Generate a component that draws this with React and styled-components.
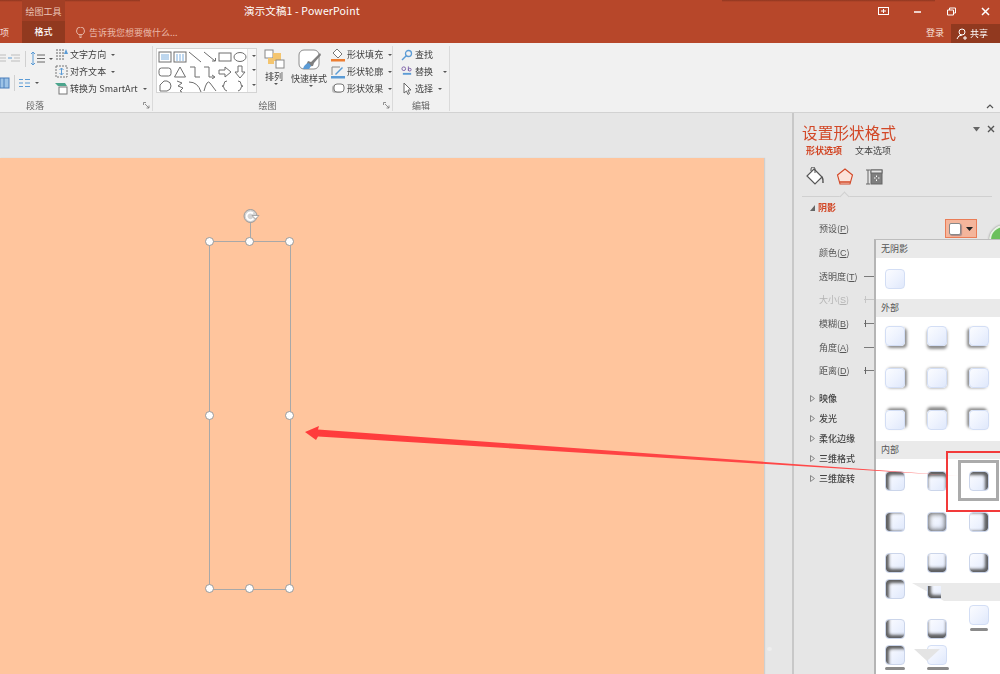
import React from 'react';
import styled, {createGlobalStyle} from 'styled-components';

const Global = createGlobalStyle`
    html, body { margin: 0; padding: 0; background: #E6E6E6; overflow: hidden; }
    body { font-family: "Noto Sans CJK SC", "Liberation Sans", sans-serif; }
`;

const Window = styled.div`
    position: relative;
    width: 1000px;
    height: 674px;
    overflow: hidden;
    display: flex;
    flex-direction: column;
    filter: blur(0.3px);
`;

/* title bar */
const TitleBar = styled.div`
    height: 43px;
    background:
        linear-gradient(#8E3620, #B7472A) 0 0 / 140px 2px no-repeat,
        linear-gradient(#8E3620, #B7472A) 722px 0 / 213px 2px no-repeat,
        #B7472A;
    color: #fff;
    display: grid;
    grid-template-rows: 21px 22px;
    flex: none;
`;

const TopRow = styled.div`
    display: flex;
    align-items: center;
`;

const BottomRow = styled.div`
    display: flex;
    align-items: center;
`;

const ContextLabel = styled.div`
    margin-left: 22px;
    width: 43px;
    height: 21px;
    background: #A23F25;
    color: #EBC4B8;
    font-size: 9px;
    line-height: 24px;
    text-align: center;
`;

const DocTitle = styled.div`
    margin-left: 179px;
    font-size: 10.5px;
    line-height: 24px;
    letter-spacing: 0.15px;
    color: #fff;
    font-family: "Noto Sans CJK SC", "Noto Sans", sans-serif;
`;

const WindowButtons = styled.div`
    margin-left: auto;
    display: grid;
    grid-template-columns: repeat(4, 34px);
    justify-items: center;
    width: 136px;
    margin-right: -2px;
    padding-top: 2px;
`;

const TabStub = styled.div`
    width: 9px;
    font-size: 9px;
    text-align: center;
    color: #F5DDD5;
`;

const ActiveTab = styled.div`
    width: 43px;
    height: 22px;
    margin-left: 13px;
    background: #91391F;
    font-size: 9px;
    font-weight: 500;
    line-height: 22px;
    text-align: center;
    color: #fff;
`;

const TellMe = styled.div`
    margin-left: 11px;
    display: flex;
    align-items: center;
    gap: 4px;
    font-size: 9px;
    color: #EAB9A9;
`;

const Login = styled.div`
    margin-left: auto;
    font-size: 9px;
    color: #F7E3DC;
    margin-right: 7px;
`;

const ShareButton = styled.div`
    width: 49px;
    height: 19px;
    margin-top: 3px;
    background: #91391F;
    display: flex;
    align-items: center;
    gap: 2px;
    padding-left: 5px;
    box-sizing: border-box;
    font-size: 9px;
    color: #fff;
`;

/* ribbon */
const Ribbon = styled.div`
    position: relative;
    height: 70px;
    flex: none;
    background: #F1F1F1;
    border-bottom: 1px solid #D2D2D2;
    box-sizing: border-box;
    display: flex;
    padding-top: 3px;
`;

const Group = styled.div`
    position: relative;
    width: ${props => props.$width}px;
    height: 65px;
    flex: none;
    border-right: 1px solid #DADADA;
    box-sizing: border-box;
    display: flex;
    flex-direction: column;
`;

const GroupBody = styled.div`
    display: flex;
    height: 53px;
    flex: none;
`;

const GroupLabel = styled.div`
    font-size: 9px;
    line-height: 14px;
    text-align: center;
    color: #666;
    padding-right: ${props => props.$shift || 0}px;
`;

const Launcher = styled.svg`
    position: absolute;
    right: 2px;
    bottom: 2px;
`;

const ParaTools = styled.div`
    width: 55px;
    flex: none;
    display: flex;
    flex-direction: column;
    gap: 9px;
    padding-top: 5px;
`;

const ParaRow = styled.div`
    display: flex;
    align-items: center;
    height: 15px;
    gap: 4px;
    margin-left: ${props => props.$offset}px;
`;

const ToolSep = styled.div`
    width: 1px;
    height: 16px;
    background: #D0D0D0;
`;

const Caret = styled.span`
    display: inline-block;
    width: 0;
    height: 0;
    border-left: 2px solid transparent;
    border-right: 2px solid transparent;
    border-top: 2.5px solid #555;
    margin-left: ${props => props.$gap || 3}px;
`;

const CommandColumn = styled.div`
    display: flex;
    flex-direction: column;
    justify-content: flex-start;
    padding-top: 0;
    margin-left: ${props => props.$offset || 0}px;
`;

const Command = styled.div`
    height: 17px;
    display: flex;
    align-items: center;
    gap: 2px;
    font-size: 9px;
    letter-spacing: 0.05px;
    color: #3F3F3F;
    white-space: nowrap;
`;

const Gallery = styled.div`
    margin: 2px 0 0 3px;
    width: 101px;
    height: 45px;
    flex: none;
    background: #fff;
    border: 1px solid #D4D4D4;
    box-sizing: border-box;
    display: flex;
`;

const ShapeGrid = styled.div`
    width: 90px;
    display: grid;
    grid-template-columns: repeat(6, 15px);
    grid-auto-rows: 14.5px;
    place-items: center;
    padding-top: 1px;
`;

const GalleryScroll = styled.div`
    flex: 1;
    display: grid;
    grid-template-rows: repeat(3, 1fr);
    border-left: 1px solid #E4E4E4;
    place-items: center;
    background: #F7F7F7;
`;

const BigButton = styled.div`
    width: ${props => props.$width}px;
    margin-left: ${props => props.$gap}px;
    display: flex;
    flex-direction: column;
    align-items: center;
    font-size: 9px;
    color: #3F3F3F;
    flex: none;
`;

const BigIcon = styled.svg`
    margin-top: 3px;
    margin-bottom: 1px;
`;

const BigLabel = styled.div`
    line-height: 13px;
    white-space: nowrap;
`;

const Collapse = styled.svg`
    position: absolute;
    right: 6px;
    bottom: 3px;
`;

/* work area */
const Workspace = styled.div`
    flex: 1;
    display: flex;
    min-height: 0;
    background: #E6E6E6;
`;

const Canvas = styled.div`
    position: relative;
    width: 792px;
    flex: none;
    padding-top: 45px;
    box-sizing: border-box;
`;

const Slide = styled.div`
    width: 764px;
    height: 530px;
    background: #FFC59D;
    padding: 83px 0 0 209px;
    box-sizing: border-box;
    box-shadow: 1px 0 1px #CFCFCF;
`;

const Selection = styled.div`
    position: relative;
    width: 82px;
    height: 349px;
    border: 1px solid #A8A8A8;
    box-sizing: border-box;
`;

const Handle = styled.div`
    position: absolute;
    width: 7px;
    height: 7px;
    border: 1px solid #999;
    border-radius: 50%;
    background: #fff;
    left: calc(${props => props.$x}% - 5px);
    top: calc(${props => props.$y}% - 5px);
`;

const RotateStem = styled.div`
    position: absolute;
    left: 40px;
    top: -20px;
    width: 1px;
    height: 20px;
    background: #A8A8A8;
`;

const RotateHandle = styled.svg`
    position: absolute;
    left: 32px;
    top: -35px;
`;

const ScrollGrip = styled.div`
    position: absolute;
    left: 767px;
    top: 534px;
    width: 5px;
    height: 4px;
    border-radius: 2px;
    background: #EEEEEE;
`;

/* format panel */
const Panel = styled.div`
    position: relative;
    flex: 1;
    border-left: 2px solid #C8C8C8;
    padding: 8px 0 0 8px;
    box-sizing: border-box;
`;

const PanelTitle = styled.div`
    font-size: 15.5px;
    line-height: 22px;
    color: #D24726;
    letter-spacing: 0.2px;
`;

const PanelClose = styled.div`
    position: absolute;
    right: 5px;
    top: 12px;
    display: flex;
    align-items: center;
    gap: 7px;
`;

const OptionTabs = styled.div`
    display: flex;
    gap: 13px;
    padding-left: 4px;
    margin-top: 1px;
    font-size: 9px;
    line-height: 14px;
`;

const OptionTab = styled.div`
    color: ${props => props.$active ? '#D24726' : '#444'};
    font-weight: ${props => props.$active ? 700 : 400};
`;

const PanelIcons = styled.div`
    display: flex;
    gap: 10px;
    padding-left: 3px;
    margin-top: 6px;
    height: 26px;
    align-items: center;
`;

const IconDivider = styled.div`
    position: relative;
    width: 190px;
    height: 1px;
    margin-top: 6px;
    background: #D0D0D0;
    &::after {
        content: '';
        position: absolute;
        left: 39px;
        top: -3px;
        width: 6px;
        height: 6px;
        background: #E6E6E6;
        border-left: 1px solid #D0D0D0;
        border-top: 1px solid #D0D0D0;
        transform: rotate(45deg);
    }
`;

const SectionHead = styled.div`
    display: flex;
    align-items: center;
    height: ${props => props.$height || 20}px;
    margin-top: ${props => props.$top || 0}px;
    padding-left: ${props => props.$indent || 6}px;
    font-size: 9px;
    font-weight: ${props => props.$active ? 700 : 500};
    color: ${props => props.$active ? '#D24726' : '#444'};
`;

const Twist = styled.svg`
    width: 5px;
    height: 7px;
    margin-right: ${props => props.$gap || 6}px;
    flex: none;
`;

const PropRow = styled.div`
    display: flex;
    align-items: center;
    height: 23.7px;
    padding-left: 17px;
    font-size: 9px;
    color: ${props => props.$disabled ? '#B4B4B4' : '#555'};
`;

const PropLabel = styled.span`
    width: ${props => props.$width || 45}px;
    flex: none;
`;

const PropKey = styled.span`
    text-decoration: underline;
    font-family: "Liberation Sans", sans-serif;
`;

const Track = styled.div`
    position: relative;
    width: 12px;
    height: 1px;
    background: ${props => props.$disabled ? '#C6C6C6' : '#7A7A7A'};
    &::before {
        content: '';
        display: ${props => props.$tick ? 'block' : 'none'};
        position: absolute;
        left: 1px;
        top: -3px;
        width: 1px;
        height: 7px;
        background: ${props => props.$disabled ? '#C6C6C6' : '#666'};
    }
`;

const PresetButton = styled.div`
    margin-left: 78px;
    width: 32px;
    height: 19px;
    background: #F4B59B;
    border: 1px solid #EA7D57;
    box-sizing: border-box;
    display: flex;
    align-items: center;
    justify-content: center;
    gap: 5px;
`;

const PresetSwatch = styled.div`
    width: 10px;
    height: 10px;
    background: #fff;
    border: 1px solid #888;
    border-radius: 2px;
    box-shadow: 1px 1px 1px #A88;
`;

const CursorDisc = styled.div`
    position: absolute;
    left: 195px;
    top: 112px;
    width: 26px;
    height: 26px;
    border-radius: 50%;
    background: #6CC05C;
    border: 2px solid #E8F2E4;
    box-shadow: 0 0 2px #777;
`;

const SubSections = styled.div`
    margin-top: 6px;
    display: flex;
    flex-direction: column;
`;

/* shadow presets popup */
const ShadowMenu = styled.div`
    position: absolute;
    left: 80px;
    top: 126px;
    width: 130px;
    height: 440px;
    background: #fff;
    border-left: 2px solid #B5B5B5;
    border-top: 1px solid #BDBDBD;
    box-sizing: border-box;
`;

const MenuHeader = styled.div`
    height: 18px;
    background: #EAEAEA;
    font-size: 9px;
    line-height: 18px;
    padding-left: 5px;
    color: #555;
`;

const TileGrid = styled.div`
    display: grid;
    grid-template-columns: 42px 42px 42px;
    grid-auto-rows: ${props => props.$pitch}px;
    padding: ${props => props.$top}px 0 0 9px;
    height: ${props => props.$height}px;
    box-sizing: border-box;
`;

const Tile = styled.div`
    position: relative;
    width: 20px;
    height: 20px;
    border-radius: 4px;
    box-sizing: border-box;
    background: linear-gradient(135deg, #FBFCFF 0%, #EDF2FE 55%, #DFE8FB 100%);
    border: 1px solid ${props => props.$inner ? '#CBD5EA' : '#D3DEF5'};
    box-shadow: ${props => props.$shadow || 'none'};
    clip-path: ${props => props.$clip || 'none'};
    &::after {
        content: '';
        display: ${props => props.$selected ? 'block' : 'none'};
        position: absolute;
        inset: -12px -11px -11px -12px;
        border: 3px solid #ABABAB;
    }
`;

const PerspectiveBand = styled.div`
    margin-left: 36px;
    height: 18px;
    background: #EAEAEA;
    clip-path: polygon(0 0, 100% 0, 100% 100%, 32px 100%);
`;

const TailGrid = styled.div`
    position: relative;
    margin-top: -22px;
    padding-left: 9px;
    display: grid;
    grid-template-columns: 42px 42px 42px;
`;

const TailColumn = styled.div`
    display: flex;
    flex-direction: column;
    padding-top: ${props => props.$top || 0}px;
`;

const TailTile = styled(Tile)`
    margin-bottom: ${props => props.$after || 0}px;
`;

const ShadowBar = styled.div`
    width: ${props => props.$width}px;
    height: 3px;
    margin-left: ${props => props.$left || 0}px;
    border-radius: 2px;
    background: #8A8A8A;
    filter: blur(0.5px);
`;

const TornTriangle = styled.div`
    position: absolute;
    left: 38px;
    top: 70px;
    width: 26px;
    height: 12px;
    background: #E4E4E4;
    clip-path: polygon(0 0, 100% 0, 50% 100%);
`;

/* annotation */
const AnnotationLayer = styled.svg`
    position: absolute;
    left: 0;
    top: 0;
    pointer-events: none;
`;

const RedFrame = styled.div`
    position: absolute;
    left: 946px;
    top: 451px;
    width: 60px;
    height: 61px;
    border: 2.5px solid #F23A3A;
    box-sizing: border-box;
`;

const blue = '#5B9BD5';
const ink = '#6E6E6E';

const shapeIcons = [
    <g><rect x="1" y="2" width="12" height="10" fill="none" stroke={ink}/><path d="M3 5h8M3 7h8M3 9h8" stroke={blue} strokeWidth=".8"/></g>,
    <g><rect x="1" y="2" width="12" height="10" fill="none" stroke={ink}/><path d="M4 4v7M7 4v7M10 4v7" stroke={blue} strokeWidth=".8"/></g>,
    <path d="M1 2l12 10" stroke={ink} fill="none"/>,
    <path d="M1 2l11 9M9 11h3.500v-3" stroke={ink} fill="none"/>,
    <rect x="1" y="3" width="12" height="8" fill="none" stroke={ink}/>,
    <ellipse cx="7" cy="7" rx="6" ry="4.500" fill="none" stroke={ink}/>,
    <rect x="1" y="3" width="12" height="8" rx="2.500" fill="none" stroke={ink}/>,
    <path d="M7 2l5.500 10h-11z" fill="none" stroke={ink}/>,
    <path d="M2 2h5v10h5" fill="none" stroke={ink}/>,
    <path d="M1 2h5v10h5M9 10l3 2-3 2" fill="none" stroke={ink}/>,
    <path d="M1 5h6V2l6 5-6 5V9H1z" fill="none" stroke={ink}/>,
    <path d="M5 1h4v6h3l-5 6-5-6h3z" fill="none" stroke={ink}/>,
    <path d="M2 12V6l4-4h3q4 1 4 5t-4 5z" fill="none" stroke={ink}/>,
    <path d="M4 2l5 2-4 3 5 2-3 3M7 12l2 1" fill="none" stroke={ink}/>,
    <path d="M1 3q9 0 12 10" fill="none" stroke={ink}/>,
    <path d="M1 12q3-12 6-8t6 8" fill="none" stroke={ink}/>,
    <path d="M9 2Q6 2 6 5t-2 2q2 0 2 2t3 3" fill="none" stroke={ink}/>,
    <path d="M5 2q3 0 3 3t2 2q-2 0-2 2t-3 3" fill="none" stroke={ink}/>,
];

const outerShadows = [
    '2px 2px 3px #8C8C8C', '0 3px 3px #8C8C8C', '-2px 2px 3px #8C8C8C',
    '2px 0 3px #8C8C8C', '0 0 3px #8C8C8C', '-2px 0 3px #8C8C8C',
    '2px -2px 3px #8C8C8C', '0 -3px 3px #8C8C8C', '-2px -2px 3px #8C8C8C',
];

const insetColor = 'rgba(70,70,70,.85)';
const innerShadows = [
    `inset 3px 3px 3px ${insetColor}`, `inset 0 4px 3px ${insetColor}`, `inset -3px 3px 3px ${insetColor}`,
    `inset 4px 0 3px ${insetColor}`, `inset 0 0 5px 1px ${insetColor}`, `inset -4px 0 3px ${insetColor}`,
    `inset 3px -3px 3px ${insetColor}`, `inset 0 -4px 3px ${insetColor}`, `inset -3px -3px 3px ${insetColor}`,
];

const properties = [
    {label: '透明度', key: 'T', track: true},
    {label: '大小', key: 'S', track: true, tick: true, disabled: true},
    {label: '模糊', key: 'B', track: true, tick: true},
    {label: '角度', key: 'A', track: true},
    {label: '距离', key: 'D', track: true, tick: true},
];

const collapsed = ['映像', '发光', '柔化边缘', '三维格式', '三维旋转'];

const handles = [[0, 0], [50, 0], [100, 0], [0, 50], [100, 50], [0, 100], [50, 100], [100, 100]];

const LauncherIcon = () => (
    <Launcher width="7" height="7" viewBox="0 0 7 7">
        <path d="M.5 3V.5H3M2 2l4 4M6 3.500V6H3.500" fill="none" stroke="#777" strokeWidth=".8"/>
    </Launcher>
);

const WindowGlyphs = () => (
    <WindowButtons>
        <svg width="11" height="9" viewBox="0 0 11 9"><rect x=".5" y=".5" width="10" height="7" fill="none" stroke="#fff"/><path d="M3 4h5M5.500 2v4" stroke="#fff"/></svg>
        <svg width="9" height="9" viewBox="0 0 9 9"><path d="M1 5h7" stroke="#fff" strokeWidth="1.500"/></svg>
        <svg width="9" height="9" viewBox="0 0 9 9"><path d="M.5 3h6v5h-6zM2.500 3V1h6v5h-2" fill="none" stroke="#fff"/></svg>
        <svg width="9" height="9" viewBox="0 0 9 9"><path d="M1 1l7 7M8 1L1 8" stroke="#fff" strokeWidth="1.500"/></svg>
    </WindowButtons>
);

const App = () => (
    <Window>
        <Global/>
        <TitleBar>
            <TopRow>
                <ContextLabel>绘图工具</ContextLabel>
                <DocTitle>演示文稿1 - PowerPoint</DocTitle>
                <WindowGlyphs/>
            </TopRow>
            <BottomRow>
                <TabStub>项</TabStub>
                <ActiveTab>格式</ActiveTab>
                <TellMe>
                    <svg width="9" height="11" viewBox="0 0 9 11"><path d="M2.500 7.500Q.5 6 .5 4a4 4 0 0 1 8 0q0 2-2 3.500zM3 9h3M3.500 10.500h2" fill="none" stroke="#F0CFC3" strokeWidth=".8"/></svg>
                    告诉我您想要做什么...
                </TellMe>
                <Login>登录</Login>
                <ShareButton>
                    <svg width="12" height="12" viewBox="0 0 12 12"><circle cx="6" cy="4" r="3" fill="none" stroke="#fff"/><path d="M1 11q1-4 5-4M7 10h4M9 8v4" fill="none" stroke="#fff"/></svg>
                    共享
                </ShareButton>
            </BottomRow>
        </TitleBar>

        <Ribbon>
            <Group $width={153}>
                <GroupBody>
                    <ParaTools>
                        <ParaRow $offset={-1}>
                            <svg width="22" height="11" viewBox="0 0 22 11"><path d="M0 2h7M0 5h7M0 8h7M12 2h9M15 5h6M12 8h9" stroke="#BDBDBD"/><path d="M9 5h4" stroke={blue}/></svg>
                            <ToolSep/>
                            <svg width="16" height="15" viewBox="0 0 16 15"><path d="M3 1v13M1 3l2-2 2 2M1 12l2 2 2-2" fill="none" stroke={blue}/><path d="M7 4h8M7 7.500h8M7 11h8" stroke="#666"/></svg>
                            <Caret $gap={-1}/>
                        </ParaRow>
                        <ParaRow $offset={0}>
                            <svg width="10" height="12" viewBox="0 0 10 12"><rect x="0" y="1" width="9" height="10" fill="#9DC3E6" stroke="#4A7EBB"/><path d="M4 1v10" stroke="#4A7EBB"/></svg>
                            <ToolSep/>
                            <svg width="11" height="10" viewBox="0 0 11 10"><path d="M0 1.500h4M6 1.500h5M0 5h4M6 5h5M0 8.500h4M6 8.500h5" stroke={blue}/></svg>
                            <Caret $gap={1}/>
                        </ParaRow>
                    </ParaTools>
                    <CommandColumn>
                        <Command>
                            <svg width="13" height="13" viewBox="0 0 13 13"><path d="M2 1v11M5 1v11M8 1v11" stroke="#666" strokeDasharray="2 1"/><path d="M11 1l-2 5h4z" fill={blue}/></svg>
                            文字方向<Caret/>
                        </Command>
                        <Command>
                            <svg width="13" height="13" viewBox="0 0 13 13"><path d="M1 1h11v11H1z" fill="none" stroke="#777" strokeDasharray="2 1"/><path d="M6.500 3v7M4.500 5l2-2 2 2M4.500 8l2 2 2-2" fill="none" stroke={blue}/></svg>
                            对齐文本<Caret/>
                        </Command>
                        <Command>
                            <svg width="13" height="13" viewBox="0 0 13 13"><path d="M0 1h10l2 3H3z" fill="#4CA58D"/><rect x="4" y="5" width="8" height="7" fill="#fff" stroke="#777"/></svg>
                            转换为 SmartArt<Caret/>
                        </Command>
                    </CommandColumn>
                </GroupBody>
                <GroupLabel $shift={82}>段落</GroupLabel>
                <LauncherIcon/>
            </Group>
            <Group $width={240}>
                <GroupBody>
                    <Gallery>
                        <ShapeGrid>
                            {shapeIcons.map((icon, i) => (
                                <svg key={i} width="14" height="14" viewBox="0 0 14 14">{icon}</svg>
                            ))}
                        </ShapeGrid>
                        <GalleryScroll>
                            <Caret $gap={0}/>
                            <Caret $gap={0}/>
                            <Caret $gap={0}/>
                        </GalleryScroll>
                    </Gallery>
                    <BigButton $width={22} $gap={6}>
                        <BigIcon width="21" height="20" viewBox="0 0 21 20">
                            <rect x="1" y="1" width="8" height="8" fill="#fff" stroke="#888"/>
                            <rect x="9" y="4" width="8" height="8" fill="#F4C56F"/>
                            <rect x="4" y="9" width="6" height="6" fill="#F4C56F"/>
                            <rect x="12" y="11" width="8" height="8" fill="#fff" stroke="#888"/>
                        </BigIcon>
                        <BigLabel>排列</BigLabel>
                        <Caret $gap={0}/>
                    </BigButton>
                    <BigButton $width={36} $gap={6}>
                        <BigIcon width="23" height="22" viewBox="0 0 23 22">
                            <rect x="1" y="1" width="20" height="19" rx="5" fill="#fff" stroke="#8C8C8C"/>
                            <path d="M22 4l-9 9-3-1-3 6 8-1 1-3 7-8z" fill="#7F7F7F"/>
                            <path d="M5 20q1-5 6-6l2 3-2 3z" fill={blue}/>
                        </BigIcon>
                        <BigLabel>快速样式</BigLabel>
                        <Caret $gap={0}/>
                    </BigButton>
                    <CommandColumn $offset={4}>
                        <Command>
                            <svg width="14" height="14" viewBox="0 0 14 14"><path d="M6 1l5 5-4 4-5-5z" fill="#fff" stroke="#777"/><rect x="0" y="11" width="14" height="2.500" fill="#ED7D31"/></svg>
                            形状填充<Caret/>
                        </Command>
                        <Command>
                            <svg width="14" height="14" viewBox="0 0 14 14"><path d="M1 10V2h8" fill="none" stroke="#888"/><path d="M4 9l7-7 1 1-7 7z" fill={blue}/><rect x="0" y="11" width="14" height="2.500" fill={blue}/></svg>
                            形状轮廓<Caret/>
                        </Command>
                        <Command>
                            <svg width="14" height="14" viewBox="0 0 14 14"><rect x="1" y="3" width="10" height="8" rx="3" fill="#bbb"/><rect x="3" y="2" width="10" height="8" rx="3" fill="#fff" stroke="#777"/></svg>
                            形状效果<Caret/>
                        </Command>
                    </CommandColumn>
                </GroupBody>
                <GroupLabel $shift={10}>绘图</GroupLabel>
                <LauncherIcon/>
            </Group>
            <Group $width={57}>
                <GroupBody>
                    <CommandColumn $offset={8}>
                        <Command>
                            <svg width="12" height="12" viewBox="0 0 12 12"><circle cx="7.500" cy="4.500" r="3" fill="none" stroke={blue} strokeWidth="1.300"/><path d="M5.500 6.500L1 11" stroke={blue} strokeWidth="1.500"/></svg>
                            查找
                        </Command>
                        <Command>
                            <svg width="12" height="13" viewBox="0 0 13 13"><circle cx="3" cy="3.500" r="2" fill="none" stroke="#7B5EA7"/><path d="M8 1v5" stroke="#7B5EA7"/><circle cx="9.500" cy="4.500" r="1.500" fill="none" stroke="#7B5EA7"/><rect x="2" y="8" width="9" height="2" fill={blue}/></svg>
                            替换<Caret $gap={8}/>
                        </Command>
                        <Command>
                            <svg width="12" height="13" viewBox="0 0 12 13"><path d="M3 1v10l2.500-2 1.500 3.500 1.500-1L7 8h3z" fill="#fff" stroke="#666"/></svg>
                            选择<Caret/>
                        </Command>
                    </CommandColumn>
                </GroupBody>
                <GroupLabel>编辑</GroupLabel>
            </Group>
            <Collapse width="8" height="6" viewBox="0 0 8 6"><path d="M1 5l3-3 3 3" fill="none" stroke="#555" strokeWidth="1.200"/></Collapse>
        </Ribbon>

        <Workspace>
            <Canvas>
                <Slide>
                    <Selection>
                        <RotateStem/>
                        <RotateHandle width="22" height="20" viewBox="0 0 22 20">
                            <circle cx="8.500" cy="9" r="6.500" fill="#D4D4D4" stroke="#9C9C9C"/>
                            <path d="M11.500 11.500a3.800 3.800 0 1 1-.5-5" fill="none" stroke="#fff" strokeWidth="1.800"/>
                            <path d="M10 8.500h7l-3.500 3.500z" fill="#fff" stroke="#8E8E8E" strokeWidth=".7"/>
                        </RotateHandle>
                        {handles.map(([x, y]) => <Handle key={`${x}-${y}`} $x={x} $y={y}/>)}
                    </Selection>
                </Slide>
                <ScrollGrip/>
            </Canvas>
            <Panel>
                <PanelTitle>设置形状格式</PanelTitle>
                <PanelClose>
                    <svg width="7" height="5" viewBox="0 0 7 5"><path d="M0 0h7L3.500 4.500z" fill="#666"/></svg>
                    <svg width="8" height="8" viewBox="0 0 8 8"><path d="M1 1l6 6M7 1L1 7" stroke="#555" strokeWidth="1.400"/></svg>
                </PanelClose>
                <OptionTabs>
                    <OptionTab $active>形状选项</OptionTab>
                    <OptionTab>文本选项</OptionTab>
                </OptionTabs>
                <PanelIcons>
                    <svg width="20" height="20" viewBox="0 0 20 20"><path d="M9 2l8 8-7 7-8-8z" fill="#fff" stroke="#555" strokeWidth="1.200"/><path d="M6 4V2a2 2 0 0 1 4 0v4" fill="none" stroke="#555"/><path d="M17 10q1.500 2.500 1 6" fill="none" stroke="#555" strokeWidth="1.500"/></svg>
                    <svg width="20" height="20" viewBox="0 0 20 20"><path d="M10 2l7.500 6-2.500 9H5L2.500 8z" fill="#FBE3DA" stroke="#D24726" strokeWidth="1.100"/><path d="M5 15h10" stroke="#D24726" strokeWidth="1.500"/></svg>
                    <svg width="18" height="16" viewBox="0 0 18 16"><path d="M1 1h4M3 1v14M1 15h4" fill="none" stroke="#666"/><rect x="6" y="1" width="11" height="14" fill="#7F7F7F" stroke="#666"/><rect x="6" y="1" width="11" height="3" fill="#E6E6E6" stroke="#666"/><path d="M9 9h1.500M13 9h1.500M11.500 6.500v1.500M11.500 10.500v1.500" stroke="#fff"/></svg>
                </PanelIcons>
                <IconDivider/>
                <SectionHead $active $top={1} $height={19} $indent={8}>
                    <Twist $gap={3} viewBox="0 0 5 7"><path d="M5 1v6H0z" fill="#666"/></Twist>
                    阴影
                </SectionHead>
                <PropRow>
                    <PropLabel $width={48}>预设(<PropKey>P</PropKey>)</PropLabel>
                    <PresetButton>
                        <PresetSwatch/>
                        <svg width="7" height="4" viewBox="0 0 7 4"><path d="M0 0h7L3.500 4z" fill="#222"/></svg>
                    </PresetButton>
                </PropRow>
                <PropRow>
                    <PropLabel>颜色(<PropKey>C</PropKey>)</PropLabel>
                </PropRow>
                {properties.map(p => (
                    <PropRow key={p.key} $disabled={p.disabled}>
                        <PropLabel>{p.label}(<PropKey>{p.key}</PropKey>)</PropLabel>
                        <Track $disabled={p.disabled} $tick={p.tick}/>
                    </PropRow>
                ))}
                <SubSections>
                    {collapsed.map(name => (
                        <SectionHead key={name} $indent={8}>
                            <Twist $gap={4} viewBox="0 0 5 7"><path d="M.5.5L4.500 3.500.5 6.500z" fill="none" stroke="#888"/></Twist>
                            {name}
                        </SectionHead>
                    ))}
                </SubSections>
                <CursorDisc/>
                <ShadowMenu>
                    <MenuHeader>无阴影</MenuHeader>
                    <TileGrid $pitch={41} $top={11} $height={41}>
                        <Tile/>
                    </TileGrid>
                    <MenuHeader>外部</MenuHeader>
                    <TileGrid $pitch={42} $top={9} $height={124}>
                        {outerShadows.map(s => <Tile key={s} $shadow={s}/>)}
                    </TileGrid>
                    <MenuHeader>内部</MenuHeader>
                    <TileGrid $pitch={41} $top={12} $height={124}>
                        {innerShadows.map((s, i) => <Tile key={s} $inner $shadow={s} $selected={i === 2}/>)}
                    </TileGrid>
                    <PerspectiveBand/>
                    <TailGrid>
                        <TailColumn>
                            <TailTile $inner $after={20} $shadow={innerShadows[0]}/>
                            <TailTile $inner $after={6} $shadow={innerShadows[6]}/>
                            <TailTile $inner $after={2} $shadow={innerShadows[0]}/>
                            <ShadowBar $width={20}/>
                        </TailColumn>
                        <TailColumn>
                            <TailTile $inner $after={20} $shadow={innerShadows[6]} $clip="polygon(0 35%, 70% 35%, 70% 100%, 0 100%)"/>
                            <TailTile $inner $after={6} $shadow={innerShadows[7]}/>
                            <TailTile $after={2}/>
                            <ShadowBar $width={22}/>
                        </TailColumn>
                        <TailColumn $top={26}>
                            <TailTile $after={3}/>
                            <ShadowBar $width={18} $left={1}/>
                        </TailColumn>
                        <TornTriangle/>
                    </TailGrid>
                </ShadowMenu>
            </Panel>
        </Workspace>

        <AnnotationLayer width="1000" height="674" viewBox="0 0 1000 674">
            <defs>
                <linearGradient id="arrowFade" x1="305" x2="960" y1="0" y2="0" gradientUnits="userSpaceOnUse">
                    <stop offset="0" stopColor="#FF3B3B"/>
                    <stop offset="0.87" stopColor="#FF4A4A"/>
                    <stop offset="1" stopColor="#FFB5B5"/>
                </linearGradient>
            </defs>
            <path d="M305 432L319 426L318 429.500L960 476L318 436.500L316 440Z" fill="url(#arrowFade)"/>
        </AnnotationLayer>
        <RedFrame/>
    </Window>
);

export default App;
